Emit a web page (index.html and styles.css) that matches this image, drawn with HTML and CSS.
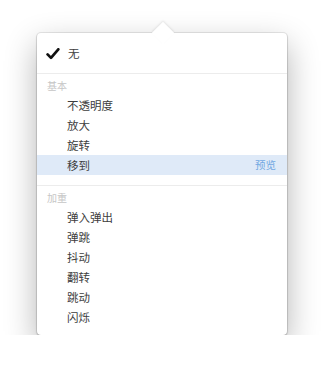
FILE: index.html
```html
<!DOCTYPE html>
<html lang="zh">
<head>
<meta charset="utf-8">
<link rel="stylesheet" href="styles.css">
</head>
<body>
<div class="stage">
  <div class="popover">
    <div class="arrow"></div>
    <div class="row checked">
      <svg class="check" width="14" height="12" viewBox="0 0 14 12"><path d="M1.6 6.4 L5 9.9 L12.3 1.3" fill="none" stroke="#111" stroke-width="2.7" stroke-linecap="round" stroke-linejoin="round"/></svg>
      <span class="label">无</span>
    </div>
    <div class="sep"></div>
    <div class="header">基本</div>
    <div class="row"><span class="label">不透明度</span></div>
    <div class="row"><span class="label">放大</span></div>
    <div class="row"><span class="label">旋转</span></div>
    <div class="row active"><span class="label">移到</span><span class="preview">预览</span></div>
    <div class="sep"></div>
    <div class="header">加重</div>
    <div class="row"><span class="label">弹入弹出</span></div>
    <div class="row"><span class="label">弹跳</span></div>
    <div class="row"><span class="label">抖动</span></div>
    <div class="row"><span class="label">翻转</span></div>
    <div class="row"><span class="label">跳动</span></div>
    <div class="row"><span class="label">闪烁</span></div>
  </div>
</div>
</body>
</html>
```
FILE: styles.css
```css
html, body {
  margin: 0;
  padding: 0;
  background: #ffffff;
}
body {
  font-family: "Noto Sans CJK SC", "Noto Sans", sans-serif;
  color: #3d3d3d;
}
.stage {
  padding: 33px 0 0 37px;
}
.popover {
  position: relative;
  width: 250px;
  box-sizing: border-box;
  background: #fff;
  border-radius: 4px;
  padding: 10px 0 8px;
  box-shadow: 0 0 0 1px rgba(0,0,0,0.08), 0 1px 2px rgba(0,0,0,0.25), 0 12px 32px rgba(0,0,0,0.3);
}
.arrow {
  position: absolute;
  left: 118px;
  top: -8px;
  width: 16px;
  height: 16px;
  background: #fff;
  transform: rotate(45deg);
  box-shadow: -1px -1px 2px rgba(0,0,0,0.08);
}
.row {
  position: relative;
  height: 20px;
  display: flex;
  align-items: center;
  padding: 0 11px 0 30px;
  font-size: 11.5px;
  line-height: 20px;
}
.row.checked {
  padding-left: 31px;
}
.check {
  position: absolute;
  left: 9px;
  top: 5px;
}
.label {
  flex: 1;
}
.row.active {
  background: #dfeaf8;
}
.preview {
  color: #72a8e2;
  font-size: 10.5px;
}
.sep {
  height: 1px;
  background: #ececec;
  margin-top: 10px;
}
.header {
  height: 21px;
  line-height: 23px;
  padding-left: 10px;
  font-size: 10px;
  color: #c6c6c6;
}
```
